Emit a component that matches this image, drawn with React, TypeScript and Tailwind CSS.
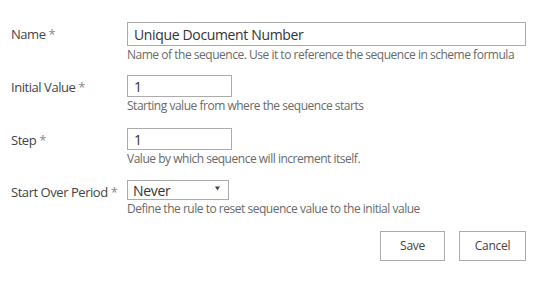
import { useState } from "react";

const font = { fontFamily: '"Open Sans", "Noto Sans", sans-serif' };

function Row({ label, help, children, className = "" }: { label: string; help: string; children: React.ReactNode; className?: string }) {
  return (
    <div className={`flex ${className}`}>
      <div className="w-[117px] shrink-0 pl-[1px] pt-[4px] text-[13px] leading-[17px] text-[#444] tracking-[-0.45px]">
        {label} <span className="text-[#888]">*</span>
      </div>
      <div className="flex flex-col flex-1">
        {children}
        <div className="mt-[1px] text-[12px] leading-[16px] text-[#6a6a6a] tracking-[-0.48px]">{help}</div>
      </div>
    </div>
  );
}

export default function App() {
  const [name, setName] = useState("Unique Document Number");
  const [initial, setInitial] = useState("1");
  const [step, setStep] = useState("1");

  return (
    <div className="w-[545px] h-[282px] bg-white pl-[10px] pr-[19px] pt-[22px]" style={font}>
      <Row label="Name" help="Name of the sequence. Use it to reference the sequence in scheme formula">
        <input
          value={name}
          onChange={e => setName(e.target.value)}
          className="w-full h-[24px] border border-[#ababab] px-[6px] text-[14px] text-[#333] tracking-[-0.35px] outline-none"
        />
      </Row>
      <Row className="mt-[12px]" label="Initial Value" help="Starting value from where the sequence starts">
        <input
          value={initial}
          onChange={e => setInitial(e.target.value)}
          className="w-[105px] h-[22px] border border-[#ababab] px-[6px] text-[14px] text-[#333] outline-none"
        />
      </Row>
      <Row className="mt-[14px]" label="Step" help="Value by which sequence will increment itself.">
        <input
          value={step}
          onChange={e => setStep(e.target.value)}
          className="w-[105px] h-[22px] border border-[#ababab] px-[6px] text-[14px] text-[#333] outline-none"
        />
      </Row>
      <Row className="mt-[13px]" label="Start Over Period" help="Define the rule to reset sequence value to the initial value">
        <div className="relative w-[102px] h-[20px] border border-[#ababab] flex items-center pl-[5px] text-[14px] text-[#333] tracking-[-0.3px]">
          <span>Never</span>
          <svg className="absolute right-[8px] top-[5px]" width="5" height="5" viewBox="0 0 5 5">
            <path d="M0 0.5 L5 0.5 L2.5 4.5 Z" fill="#444" />
          </svg>
        </div>
      </Row>
      <div className="flex justify-end gap-[14px] mt-[14px]">
        <button className="w-[65px] h-[30px] border border-[#ababab] bg-white text-[12px] text-[#444] tracking-[-0.3px]">Save</button>
        <button className="w-[67px] h-[30px] border border-[#ababab] bg-white text-[12px] text-[#444] tracking-[-0.3px]">Cancel</button>
      </div>
    </div>
  );
}
